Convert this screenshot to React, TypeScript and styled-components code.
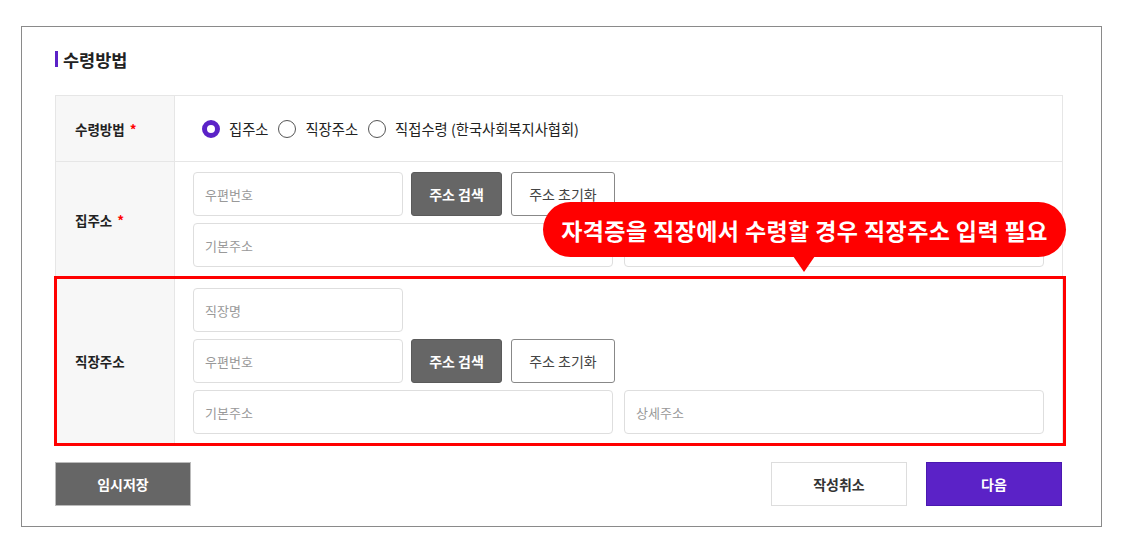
import React from "react";
import styled, { createGlobalStyle } from "styled-components";

const Global = createGlobalStyle`
  * { box-sizing: border-box; }
  html, body { margin: 0; padding: 0; background: #fff; }
  body { font-family: "Noto Sans CJK KR", "Noto Sans", sans-serif; color: #222; }
  input, button { font-family: inherit; }
`;

const Frame = styled.div`
  margin: 26px 0 0 21px;
  width: 1081px;
  height: 501px;
  border: 1px solid #8a8a8a;
  padding: 22px 38px 0 33px;
`;

const Title = styled.h2`
  display: flex;
  align-items: center;
  gap: 5px;
  margin: 0;
  height: 20px;
  font-size: 17.5px;
  font-weight: 700;
  color: #222;
  &::before {
    content: "";
    width: 3px;
    height: 16px;
    background: #5b22c7;
  }
`;

const Table = styled.div`
  position: relative;
  margin-top: 26px;
  border: 1px solid #e6e6e6;
  border-bottom: none;
`;

const Row = styled.div<{ $highlight?: boolean }>`
  position: relative;
  display: grid;
  grid-template-columns: 119px 1fr;
  border-bottom: 1px solid #e6e6e6;
  ${(p) =>
    p.$highlight &&
    `
    &::after {
      content: "";
      position: absolute;
      top: -2px;
      left: -2px;
      right: -4px;
      bottom: -2px;
      border: 3px solid #ff0000;
      pointer-events: none;
    }
  `}
`;

const Label = styled.div`
  display: flex;
  align-items: center;
  padding-left: 19px;
  background: #f7f7f7;
  border-right: 1px solid #e6e6e6;
  font-size: 13.5px;
  font-weight: 700;
  color: #222;
`;

const Star = styled.span`
  color: #ff0000;
  margin-left: 5px;
`;

const Cell = styled.div<{ $radio?: boolean }>`
  display: flex;
  flex-direction: column;
  gap: 7px;
  padding: 10px 18px;
  ${(p) => p.$radio && `min-height: 65px; justify-content: center; padding: 0 0 0 27px;`}
`;

const RadioGroup = styled.div`
  display: flex;
  align-items: center;
  gap: 10px;
`;

const RadioItem = styled.label`
  display: flex;
  align-items: center;
  gap: 9px;
  font-size: 14.3px;
  color: #222;
`;

const RadioCircle = styled.span<{ $checked?: boolean }>`
  width: 18px;
  height: 18px;
  border-radius: 50%;
  border: ${(p) => (p.$checked ? "5px solid #5b22c7" : "1.5px solid #555")};
  background: #fff;
`;

const Line = styled.div`
  display: flex;
  align-items: center;
`;

const TwoCols = styled.div`
  display: grid;
  grid-template-columns: 1fr 1fr;
  gap: 11px;
`;

const Input = styled.input<{ $w?: number }>`
  height: 44px;
  width: ${(p) => (p.$w ? `${p.$w}px` : "100%")};
  border: 1px solid #dedede;
  border-radius: 4px;
  padding: 0 11px;
  font-size: 13px;
  color: #333;
  outline: none;
  &::placeholder { color: #999; }
`;

const SmallBtn = styled.button<{ $dark?: boolean; $w: number }>`
  height: 44px;
  width: ${(p) => p.$w}px;
  margin-left: ${(p) => (p.$dark ? 8 : 9)}px;
  border-radius: 3px;
  border: 1px solid ${(p) => (p.$dark ? "#5a5a5a" : "#888")};
  background: ${(p) => (p.$dark ? "#666" : "#fff")};
  color: ${(p) => (p.$dark ? "#fff" : "#444")};
  font-size: 14px;
  font-weight: ${(p) => (p.$dark ? 700 : 400)};
  padding: 0;
`;

const Tooltip = styled.div`
  position: absolute;
  left: 487px;
  top: 106px;
  width: 523px;
  height: 55px;
  border-radius: 28px;
  background: #ff0000;
  color: #fff;
  font-size: 23px;
  font-weight: 700;
  letter-spacing: 0.4px;
  display: flex;
  align-items: center;
  justify-content: center;
  z-index: 2;
  &::after {
    content: "";
    position: absolute;
    left: 250px;
    top: 54px;
    border-left: 11px solid transparent;
    border-right: 11px solid transparent;
    border-top: 16px solid #ff0000;
  }
`;

const Footer = styled.div`
  display: flex;
  align-items: center;
  margin-top: 17px;
  margin-right: 1px;
`;

const Spacer = styled.div`
  flex: 1;
`;

const FootBtn = styled.button<{ $variant: "gray" | "white" | "purple" }>`
  width: 136px;
  height: 44px;
  font-size: 14px;
  font-weight: 700;
  padding: 0;
  border: 1px solid
    ${(p) => (p.$variant === "gray" ? "#bbb" : p.$variant === "white" ? "#ddd" : "#4a18b0")};
  background: ${(p) => (p.$variant === "gray" ? "#666" : p.$variant === "white" ? "#fff" : "#5b22c7")};
  color: ${(p) => (p.$variant === "white" ? "#333" : "#fff")};
  & + & { margin-left: 19px; }
`;

export default function App() {
  return (
    <>
      <Global />
      <Frame>
        <Title>수령방법</Title>
        <Table>
          <Row>
            <Label>
              수령방법<Star>*</Star>
            </Label>
            <Cell $radio>
              <RadioGroup>
                <RadioItem>
                  <RadioCircle $checked />
                  집주소
                </RadioItem>
                <RadioItem>
                  <RadioCircle />
                  직장주소
                </RadioItem>
                <RadioItem>
                  <RadioCircle />
                  직접수령 (한국사회복지사협회)
                </RadioItem>
              </RadioGroup>
            </Cell>
          </Row>
          <Row>
            <Label>
              집주소<Star>*</Star>
            </Label>
            <Cell>
              <Line>
                <Input $w={210} placeholder="우편번호" />
                <SmallBtn $dark $w={91}>주소 검색</SmallBtn>
                <SmallBtn $w={104}>주소 초기화</SmallBtn>
              </Line>
              <TwoCols>
                <Input placeholder="기본주소" />
                <Input placeholder="상세주소" />
              </TwoCols>
            </Cell>
          </Row>
          <Row $highlight>
            <Label>직장주소</Label>
            <Cell>
              <Line>
                <Input $w={210} placeholder="직장명" />
              </Line>
              <Line>
                <Input $w={210} placeholder="우편번호" />
                <SmallBtn $dark $w={91}>주소 검색</SmallBtn>
                <SmallBtn $w={104}>주소 초기화</SmallBtn>
              </Line>
              <TwoCols>
                <Input placeholder="기본주소" />
                <Input placeholder="상세주소" />
              </TwoCols>
            </Cell>
          </Row>
          <Tooltip>자격증을 직장에서 수령할 경우 직장주소 입력 필요</Tooltip>
        </Table>
        <Footer>
          <FootBtn $variant="gray">임시저장</FootBtn>
          <Spacer />
          <FootBtn $variant="white">작성취소</FootBtn>
          <FootBtn $variant="purple">다음</FootBtn>
        </Footer>
      </Frame>
    </>
  );
}
